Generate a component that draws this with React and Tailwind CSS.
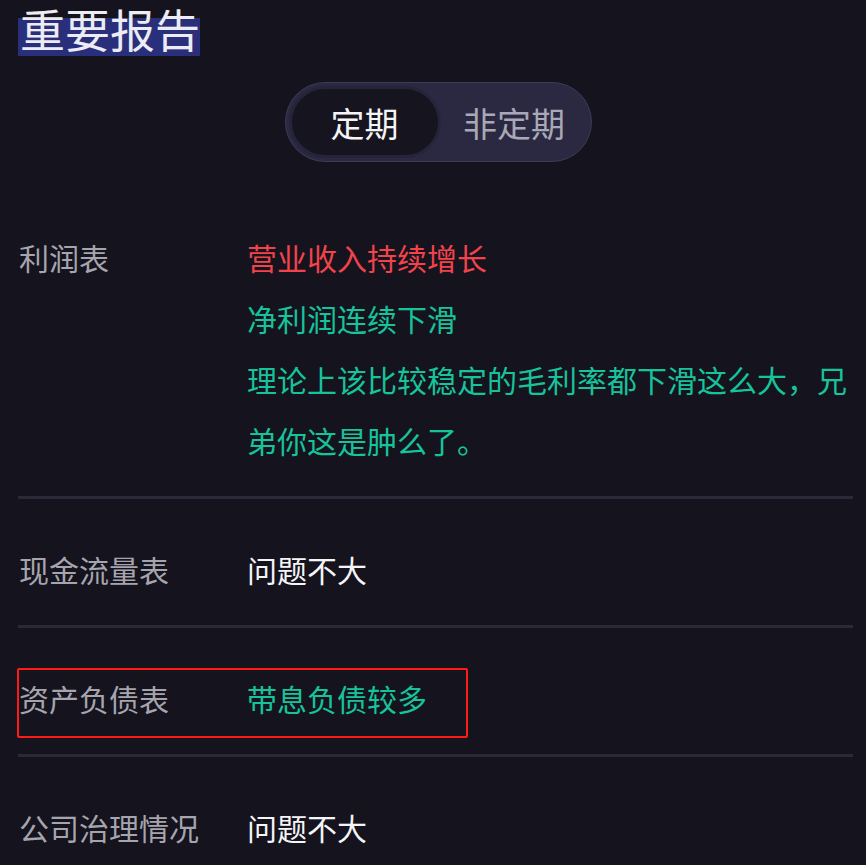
import React from "react";

const font = { fontFamily: '"Noto Sans CJK SC", "Noto Sans", sans-serif' };

function Row({ label, children, boxed }) {
  return (
    <div className="relative flex items-start pt-[40px] pb-[25px]">
      {boxed && (
        <div className="absolute left-[-1px] top-[40px] w-[451px] h-[70px] border-2 border-[#ff1a16] rounded-[2px]" />
      )}
      <div className="w-[229px] shrink-0 pl-[1px] text-[30px] leading-[61px] text-[#a6a5ad]">
        {label}
      </div>
      <div className="flex-1 text-[30px] leading-[61px]">{children}</div>
    </div>
  );
}

export default function App() {
  return (
    <div className="w-[866px] h-[865px] overflow-hidden bg-[#14131e] pl-[18px] pr-[13px]" style={font}>
      {/* Title */}
      <div className="h-[56px] pt-[6px]">
        <h1 className="relative inline-block text-[45px] leading-[45px] font-normal text-[#ececf2]">
          <span className="absolute left-0 top-[12px] w-[182px] h-[38px] bg-[#2a2f7c]" />
          <span className="relative pl-[2px]">重要报告</span>
        </h1>
      </div>

      {/* Toggle */}
      <div className="flex justify-center pl-[5px] mt-[26px]">
        <div className="flex items-center w-[307px] h-[80px] rounded-full bg-[#2b2941] border border-[#3d3a58] p-[3px]">
          <div className="flex items-center justify-center w-[152px] h-full rounded-full bg-[#16151f] border-[3px] border-[#26243a] text-[34px] text-[#f4f4f6]">
            定期
          </div>
          <div className="flex-1 flex items-center justify-center text-[34px] text-[#a9a8b6]">
            非定期
          </div>
        </div>
      </div>

      <div className="mt-[25px]">
        <Row label="利润表">
          <div className="text-[#f2434b]">营业收入持续增长</div>
          <div className="text-[#17c39b]">净利润连续下滑</div>
          <div className="text-[#17c39b]">理论上该比较稳定的毛利率都下滑这么大，兄弟你这是肿么了。</div>
        </Row>
        <div className="h-[3px] bg-[#2a2938]" />
        <Row label="现金流量表">
          <div className="text-[#f5f5f7]">问题不大</div>
        </Row>
        <div className="h-[3px] bg-[#2a2938]" />
        <Row label="资产负债表" boxed>
          <div className="text-[#17c39b]">带息负债较多</div>
        </Row>
        <div className="h-[3px] bg-[#2a2938]" />
        <Row label="公司治理情况">
          <div className="text-[#f5f5f7]">问题不大</div>
        </Row>
      </div>
    </div>
  );
}
